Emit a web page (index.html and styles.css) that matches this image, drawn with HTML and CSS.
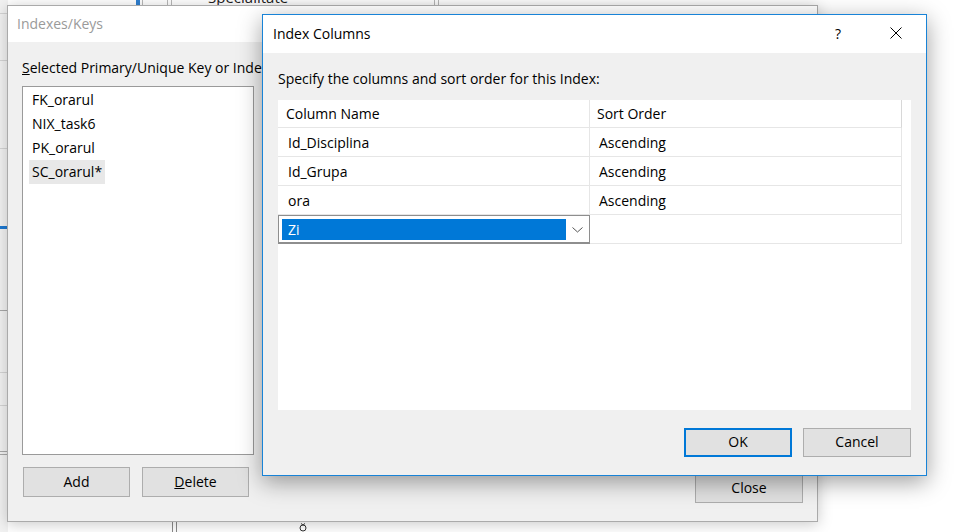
FILE: index.html
```html
<!DOCTYPE html>
<html lang="en">
<head>
<meta charset="utf-8">
<title>Index Columns</title>
<link rel="stylesheet" href="styles.css">
</head>
<body>
<div class="desk">
  <!-- background designer fragments -->
  <div class="frag frag-blue"></div>
  <div class="frag vline" style="left:142px;top:0;height:6px"></div>
  <div class="frag vline" style="left:167px;top:0;height:6px"></div>
  <div class="frag vline" style="left:171px;top:0;height:6px"></div>
  <div class="frag vline" style="left:434px;top:0;height:6px"></div>
  <div class="frag vline" style="left:438px;top:0;height:6px"></div>
  <div class="frag frag-text">Specialitate</div>
  <div class="frag left-strip">
    <div class="hl" style="top:13px"></div>
    <div class="hl" style="top:60px"></div>
    <div class="hl" style="top:148px"></div>
    <div class="hl blue" style="top:226px"></div>
    <div class="hl dark" style="top:310px"></div>
    <div class="hl" style="top:372px"></div>
    <div class="hl" style="top:405px"></div>
    <div class="hl dark" style="top:451px"></div>
    <div class="hl dark" style="top:454px"></div>
  </div>
  <div class="frag vline dark" style="left:172px;top:520px;height:12px"></div>
  <div class="frag vline dark" style="left:176px;top:520px;height:12px"></div>
  <svg class="frag frag-glyph" width="10" height="10" viewBox="0 0 10 10"><circle cx="5" cy="6" r="3" fill="none" stroke="#333" stroke-width="1"/><path d="M3 1.5 L5 3 L7 1.5" fill="none" stroke="#333" stroke-width="1"/></svg>

  <!-- back window -->
  <section class="win win-back">
    <header class="tbar tbar-back"><span class="ttl ttl-inactive">Indexes/Keys</span></header>
    <div class="back-body">
      <div class="back-left">
        <div class="lbl"><u>S</u>elected Primary/Unique Key or Index:</div>
        <ul class="keylist">
          <li>FK_orarul</li>
          <li>NIX_task6</li>
          <li>PK_orarul</li>
          <li class="sel">SC_orarul*</li>
        </ul>
        <div class="btnrow">
          <button class="btn">Add</button>
          <button class="btn"><u>D</u>elete</button>
        </div>
      </div>
      <div class="back-right">
        <button class="btn">Close</button>
      </div>
    </div>
  </section>

  <!-- front window -->
  <section class="win win-front">
    <header class="tbar tbar-front">
      <span class="ttl">Index Columns</span>
      <span class="help">?</span>
      <span class="xbtn"><svg width="12" height="12" viewBox="0 0 12 12"><path d="M0.5 0.5 L11.5 11.5 M11.5 0.5 L0.5 11.5" stroke="#000" stroke-width="1" fill="none"/></svg></span>
    </header>
    <div class="front-body">
      <div class="lbl">Specify the columns and sort order for this Index:</div>
      <div class="panel">
        <div class="grid">
          <div class="hd c1">Column Name</div>
          <div class="hd c2">Sort Order</div>
          <div class="cell c1">Id_Disciplina</div>
          <div class="cell c2">Ascending</div>
          <div class="cell c1">Id_Grupa</div>
          <div class="cell c2">Ascending</div>
          <div class="cell c1">ora</div>
          <div class="cell c2">Ascending</div>
          <div class="cell c1 combo-cell">
            <div class="combo">
              <div class="combo-sel">Zi</div>
              <div class="combo-arrow"><svg width="11" height="6" viewBox="0 0 11 6"><path d="M0.5 0.5 L5.5 5 L10.5 0.5" fill="none" stroke="#555" stroke-width="1"/></svg></div>
            </div>
          </div>
          <div class="cell c2"></div>
        </div>
      </div>
      <div class="actions">
        <button class="btn btn-default">OK</button>
        <button class="btn">Cancel</button>
      </div>
    </div>
  </section>
</div>
</body>
</html>
```
FILE: styles.css
```css
* { box-sizing: border-box; margin: 0; padding: 0; }

html, body {
  width: 960px;
  height: 532px;
  overflow: hidden;
}

body {
  background: #ffffff;
  font-family: "Open Sans", "Noto Sans", "DejaVu Sans", sans-serif;
  font-size: 14px;
  color: #000;
}

.desk {
  position: relative;
  width: 960px;
  height: 532px;
  overflow: hidden;
}

/* background fragments */
.frag { position: absolute; }
.vline { width: 1px; background: #b8b8b8; }
.vline.dark { background: #8a8a8a; }
.frag-blue { left: 136px; top: 0; width: 4px; height: 6px; background: #2f7fd0; }
.frag-text { left: 208px; top: -12px; font-size: 15px; line-height: 18px; color: #222; }
.left-strip { left: 0; top: 0; width: 8px; height: 532px; background: #f2f2f2; }
.left-strip .hl { position: absolute; left: 0; width: 8px; height: 1px; background: #d4d4d4; }
.left-strip .hl.dark { background: #a8a8a8; }
.left-strip .hl.blue { height: 3px; background: #1e78d0; }
.frag-glyph { left: 298px; top: 522px; }

/* windows */
.win {
  position: absolute;
  display: flex;
  flex-direction: column;
  background: #f0f0f0;
}

.win-back {
  left: 7px;
  top: 5px;
  width: 811px;
  height: 517px;
  border: 1px solid #aaaaaa;
  box-shadow: 0 2px 14px rgba(0, 0, 0, 0.22);
}

.win-front {
  left: 262px;
  top: 14px;
  width: 665px;
  height: 462px;
  border: 1px solid #1883d7;
  box-shadow: 0 6px 22px rgba(0, 0, 0, 0.38);
}

.tbar {
  background: #fff;
  display: flex;
  align-items: center;
  flex: none;
}
.tbar-back { height: 36px; padding-left: 9px; padding-bottom: 2px; }
.tbar-front { height: 38px; padding-left: 10px; padding-bottom: 2px; }

.ttl { font-size: 14px; line-height: 19px; flex: 1; }
.ttl-inactive { color: #9a9a9a; }

.help {
  width: 30px;
  text-align: center;
  font-size: 14px;
  line-height: 19px;
}
.xbtn {
  width: 46px;
  margin-left: 20px;
  margin-right: 7px;
  display: flex;
  justify-content: center;
  align-items: center;
}
.xbtn svg { display: block; }

.lbl { line-height: 19px; white-space: nowrap; }

/* back window body */
.back-body {
  flex: 1;
  display: flex;
  justify-content: space-between;
  padding: 16px 14px 18px 14px;
}
.back-left { display: flex; flex-direction: column; width: 232px; }
.back-left .lbl { height: 19px; }

.keylist {
  list-style: none;
  margin-top: 9px;
  height: 369px;
  background: #fff;
  border: 1px solid #9a9a9a;
  padding-top: 1px;
}
.keylist li {
  width: fit-content;
  margin-left: 6px;
  padding: 0 3px;
  line-height: 24px;
  height: 24px;
}
.keylist li.sel { background: #e8e8e8; }

.btnrow {
  display: flex;
  gap: 12px;
  margin-top: 12px;
  padding-left: 1px;
}

.back-right {
  display: flex;
  align-items: flex-end;
}

.btn {
  font-family: inherit;
  font-size: 14px;
  color: #000;
  width: 107px;
  height: 30px;
  background: #e1e1e1;
  border: 1px solid #adadad;
  line-height: 19px;
  padding-bottom: 2px;
}
.back-right .btn { width: 108px; height: 30px; }

/* front window body */
.front-body {
  flex: 1;
  display: flex;
  flex-direction: column;
  padding: 16px 15px 18px 15px;
}
.front-body .lbl { height: 19px; }

.panel {
  margin-top: 12px;
  height: 310px;
  background: #fff;
}

.grid {
  display: grid;
  grid-template-columns: 312px 312px;
}
.hd {
  height: 28px;
  line-height: 27px;
  border-bottom: 1px solid #e6e6e6;
}
.hd.c1 { padding-left: 8px; border-right: 1px solid #e6e6e6; }
.hd.c2 { padding-left: 7px; border-right: 1px solid #d8d8d8; }

.cell {
  height: 29px;
  line-height: 29px;
  border-bottom: 1px solid #e6e6e6;
}
.cell.c1 { padding-left: 10px; border-right: 1px solid #e6e6e6; }
.cell.c2 { padding-left: 9px; border-right: 1px solid #e6e6e6; }

.cell.combo-cell { padding: 0; border-right: none; border-bottom: none; }
.combo {
  height: 29px;
  border: 1px solid #8e8e8e;
  border-bottom-width: 2px;
  display: flex;
  padding: 3px 0 2px 3px;
  background: #fff;
}
.combo-sel {
  flex: none;
  width: 284px;
  background: #0078d7;
  color: #fff;
  padding-left: 6px;
  line-height: 22px;
}
.combo-arrow {
  flex: 1;
  display: flex;
  align-items: center;
  justify-content: center;
  padding-top: 1px;
}
.combo-arrow svg { display: block; }

.actions {
  margin-top: auto;
  display: flex;
  justify-content: flex-end;
  gap: 11px;
}
.actions .btn { width: 108px; height: 29px; }
.btn-default { border: 2px solid #0078d7; }
```
